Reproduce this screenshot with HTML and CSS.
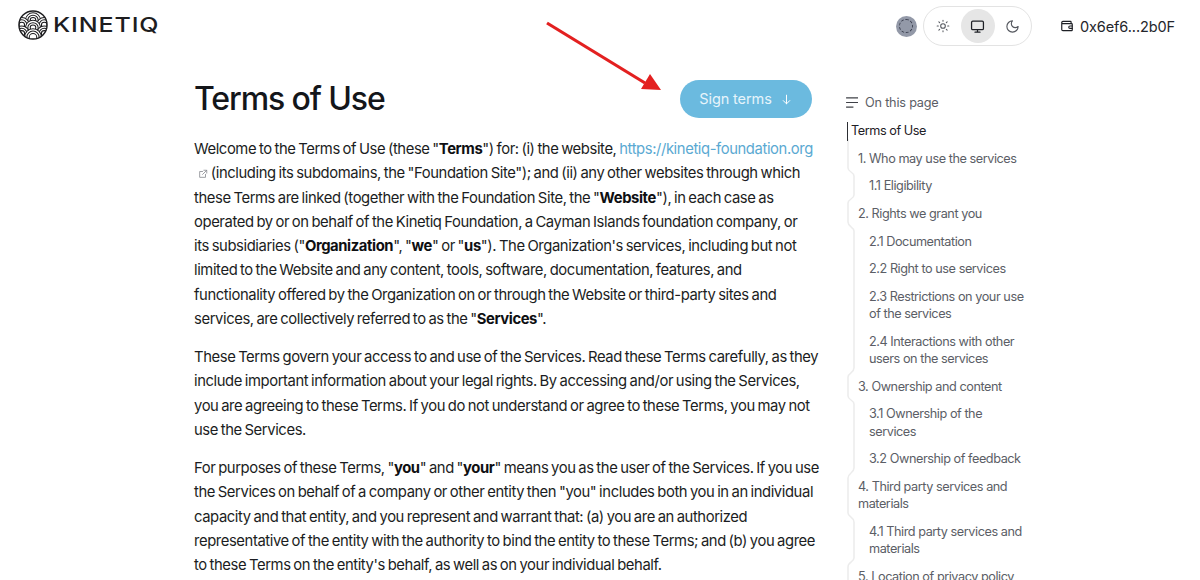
FILE: index.html
```html
<!DOCTYPE html>
<html lang="en">
<head>
<meta charset="utf-8">
<title>Terms of Use</title>
<link rel="stylesheet" href="styles.css">
</head>
<body>
<header class="topbar">
  <div class="brand">
    <svg class="brand-mark" viewBox="0 0 32 32" width="30" height="30" aria-hidden="true">
      <defs><clipPath id="disc"><circle cx="16" cy="16" r="15"/></clipPath></defs>
      <g clip-path="url(#disc)">
        <rect width="32" height="32" fill="#fff"/>
        <g class="fan" transform="translate(16 11)"><circle r="8"/><circle r="5.500"/><circle r="3"/></g>
        <g class="fan" transform="translate(4 16)"><circle r="8"/><circle r="5.500"/><circle r="3"/></g>
        <g class="fan" transform="translate(28 16)"><circle r="8"/><circle r="5.500"/><circle r="3"/></g>
        <g class="fan" transform="translate(16 19)"><circle r="8"/><circle r="5.500"/><circle r="3"/></g>
        <g class="fan" transform="translate(4 25)"><circle r="8"/><circle r="5.500"/><circle r="3"/></g>
        <g class="fan" transform="translate(28 25)"><circle r="8"/><circle r="5.500"/><circle r="3"/></g>
        <g class="fan" transform="translate(16 29)"><circle r="9"/><circle r="6.500"/><circle r="4"/></g>
      </g>
      <circle cx="16" cy="16" r="15" fill="none" stroke="#1c1c1e" stroke-width="1.500"/>
    </svg>
    <span class="brand-name">KINETIQ</span>
  </div>
  <div class="top-actions">
    <span class="avatar"><span class="avatar-ring"></span></span>
    <div class="theme-switch">
      <span class="theme-btn">
        <svg viewBox="0 0 24 24" width="14" height="14" class="ic"><circle cx="12" cy="12" r="4"/><path d="M12 2v2M12 20v2M4.900 4.900l1.400 1.400M17.700 17.700l1.400 1.400M2 12h2M20 12h2M4.900 19.100l1.400-1.400M17.700 6.300l1.400-1.400"/></svg>
      </span>
      <span class="theme-btn theme-btn-active">
        <svg viewBox="0 0 24 24" width="15" height="15" class="ic ic-dark"><rect x="2.500" y="3.500" width="19" height="13.500" rx="2"/><path d="M12 17v4M8 21h8"/></svg>
      </span>
      <span class="theme-btn">
        <svg viewBox="0 0 24 24" width="15" height="15" class="ic"><path d="M12 3a6 6 0 0 0 9 9 9 9 0 1 1-9-9z"/></svg>
      </span>
    </div>
    <div class="wallet">
      <svg viewBox="0 0 24 24" width="14" height="14" class="ic ic-dark"><path d="M19 7V5a1 1 0 0 0-1-1H5a2 2 0 0 0 0 4h15a1 1 0 0 1 1 1v10a1 1 0 0 1-1 1H5a2 2 0 0 1-2-2V6"/><path d="M21 12h-4a2 2 0 0 0 0 4h4"/></svg>
      <span>0x6ef6...2b0F</span>
    </div>
  </div>
</header>

<svg class="arrow" viewBox="0 0 130 80" width="130" height="80" aria-hidden="true">
  <path d="M2 2 L100 62" stroke="#e32020" stroke-width="3.200" fill="none"/>
  <path d="M116 69 L96 68 L105 53 Z" fill="#e32020"/>
</svg>

<div class="page">
  <main class="article">
    <div class="title-row">
      <h1>Terms of Use</h1>
      <a class="sign-btn">Sign terms
        <svg viewBox="0 0 24 24" width="13" height="13" class="ic ic-white"><path d="M12 4v16M6 14l6 6 6-6"/></svg>
      </a>
    </div>
    <p>Welcome to the Terms of Use (these "<b>Terms</b>") for: (i) the website, <a class="link">https://kinetiq-foundation.org</a><br><svg class="ext ic" viewBox="0 0 24 24" width="10" height="10"><path d="M18 13v7H4V6h7M14 3h7v7M21 3L11 13"/></svg> (including its subdomains, the "Foundation Site"); and (ii) any other websites through which<br>these Terms are linked (together with the Foundation Site, the "<b>Website</b>"), in each case as<br>operated by or on behalf of the Kinetiq Foundation, a Cayman Islands foundation company, or<br>its subsidiaries ("<b>Organization</b>", "<b>we</b>" or "<b>us</b>"). The Organization's services, including but not<br>limited to the Website and any content, tools, software, documentation, features, and<br>functionality offered by the Organization on or through the Website or third-party sites and<br>services, are collectively referred to as the "<b>Services</b>".</p>
    <p>These Terms govern your access to and use of the Services. Read these Terms carefully, as they<br>include important information about your legal rights. By accessing and/or using the Services,<br>you are agreeing to these Terms. If you do not understand or agree to these Terms, you may not<br>use the Services.</p>
    <p>For purposes of these Terms, "<b>you</b>" and "<b>your</b>" means you as the user of the Services. If you use<br>the Services on behalf of a company or other entity then "you" includes both you in an individual<br>capacity and that entity, and you represent and warrant that: (a) you are an authorized<br>representative of the entity with the authority to bind the entity to these Terms; and (b) you agree<br>to these Terms on the entity's behalf, as well as on your individual behalf.</p>
  </main>
  <aside class="toc">
    <div class="toc-head">
      <svg viewBox="0 0 14 12" width="13" height="11" class="toc-icon"><path d="M0 1h13M0 6h13M0 11h8"/></svg>
      <span>On this page</span>
    </div>
    <nav class="toc-list">
      <svg class="toc-rail" viewBox="0 0 10 470" width="10" height="470" aria-hidden="true">
        <path d="M2 22V51C2 55 8 55 8 59V78C8 82 2 82 2 86V105C2 110 8 110 8 114V251C8 256 2 256 2 260V279C2 283 8 283 8 287V351C8 356 2 356 2 361V396C2 400 8 400 8 405V441C8 445 2 445 2 450V470"/>
      </svg>
      <a class="toc-item toc-active">Terms of Use</a>
      <a class="toc-item lv1">1. Who may use the services</a>
      <a class="toc-item lv2">1.1 Eligibility</a>
      <a class="toc-item lv1">2. Rights we grant you</a>
      <a class="toc-item lv2">2.1 Documentation</a>
      <a class="toc-item lv2">2.2 Right to use services</a>
      <a class="toc-item lv2">2.3 Restrictions on your use of the services</a>
      <a class="toc-item lv2">2.4 Interactions with other users on the services</a>
      <a class="toc-item lv1">3. Ownership and content</a>
      <a class="toc-item lv2">3.1 Ownership of the services</a>
      <a class="toc-item lv2">3.2 Ownership of feedback</a>
      <a class="toc-item lv1">4. Third party services and materials</a>
      <a class="toc-item lv2">4.1 Third party services and materials</a>
      <a class="toc-item lv1">5. Location of privacy policy</a>
    </nav>
  </aside>
</div>
</body>
</html>
```
FILE: styles.css
```css
* { box-sizing: border-box; }
html, body { margin: 0; height: 580px; overflow: hidden; }
body { background: #fff; color: #16181d; font-family: Inter, "Noto Sans", sans-serif; position: relative; }
.topbar { height: 50px; display: flex; justify-content: space-between; align-items: center; padding: 0 25px 0 18px; }
.brand { display: flex; align-items: center; gap: 5px; width: 140px; }
.brand-mark { display: block; flex: none; }
.fan circle { fill: #fff; stroke: #1c1c1e; stroke-width: 1.100; }
.brand-name { font-size: 20px; font-weight: 500; letter-spacing: .7px; color: #1d1d1f; transform: scaleX(1.25); transform-origin: left center; }
.top-actions { display: flex; align-items: center; margin-top: 2px; }
.avatar { width: 21px; height: 21px; border-radius: 50%; background: #9399a8; display: flex; align-items: center; justify-content: center; margin-right: 6px; }
.avatar-ring { width: 14px; height: 14px; border-radius: 50%; border: 1.500px dashed #3c4050; }
.theme-switch { display: flex; align-items: center; width: 109px; height: 40px; border: 1px solid #e3e3e3; border-radius: 20px; padding: 0 1px 0 2px; justify-content: space-between; }
.theme-btn { width: 34px; height: 34px; border-radius: 50%; display: flex; align-items: center; justify-content: center; }
.theme-btn-active { background: #e6e6e6; }
.ic { fill: none; stroke: #55585f; stroke-width: 1.800; stroke-linecap: round; stroke-linejoin: round; }
.ic-dark { stroke: #1e2026; stroke-width: 2; }
.ic-white { stroke: #fff; }
.wallet { display: flex; align-items: center; gap: 6px; margin-left: 28px; font-size: 14.500px; letter-spacing: -.1px; color: #24262b; }
.arrow { position: absolute; left: 545px; top: 21px; }
.page { display: flex; padding-left: 194px; }
.article { width: 625px; font-size: 14.800px; line-height: 24.250px; letter-spacing: -.4px; word-spacing: -1px; color: #1b1d22; white-space: nowrap; }
.title-row { display: flex; justify-content: space-between; align-items: center; margin: 30px 0 19px; padding-right: 7px; height: 38px; word-spacing: 0; }
h1 { margin: 0; font-size: 32px; font-weight: 500; letter-spacing: -1.100px; color: #14161a; }
.sign-btn { width: 132px; height: 38px; border-radius: 19px; background: #6bbadf; color: #e6f4fb; font-size: 14.500px; letter-spacing: -.1px; display: flex; align-items: center; justify-content: center; gap: 8px; }
.article p { margin: 0 0 14px; }
.article p b { font-weight: 700; color: #0e0f12; }
.link { color: #5aa9d2; }
.ext { stroke: #8a8d93; stroke-width: 2; margin: 0 0 -1px 4px; }
.toc { margin-left: 27px; width: 181px; font-size: 12.700px; line-height: 17.350px; letter-spacing: -.45px; color: #5b5e66; padding-top: 44px; }
.toc-head { display: flex; align-items: center; gap: 6px; height: 17px; letter-spacing: -.2px; }
.toc-icon { fill: none; stroke: #3f4147; stroke-width: 1.300; }
.toc-list { margin-top: 6px; position: relative; }
.toc-rail { position: absolute; left: 0; top: 0; fill: none; stroke: #ececec; stroke-width: 1.500; }
.toc-item { display: block; padding: 5.150px 0; position: relative; }
.toc-active { color: #1e2026; padding-left: 5px; }
.toc-active::before { content: ""; position: absolute; left: 1px; top: 5px; bottom: 4px; width: 1px; background: #2c2e33; }
.lv1 { padding-left: 12px; }
.lv2 { padding-left: 23px; }
```
